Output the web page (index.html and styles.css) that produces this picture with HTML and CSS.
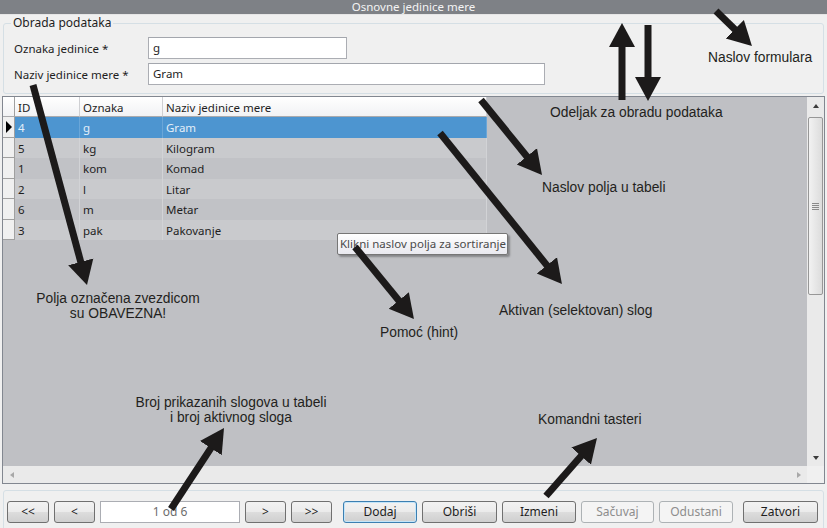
FILE: index.html
```html
<!DOCTYPE html>
<html lang="sr">
<head>
<meta charset="utf-8">
<title>Osnovne jedinice mere</title>
<link rel="stylesheet" href="styles.css">
</head>
<body>
<div class="window">
  <div class="titlebar">Osnovne jedinice mere</div>

  <fieldset class="editor">
    <legend>Obrada podataka</legend>
    <div class="fields">
      <div class="field">
        <label>Oznaka jedinice *</label>
        <div class="input input-short">g</div>
      </div>
      <div class="field">
        <label>Naziv jedinice mere *</label>
        <div class="input input-long">Gram</div>
      </div>
    </div>
  </fieldset>

  <div class="grid">
    <div class="grid-main">
      <div class="grid-body">
        <div class="row head">
          <div class="rh"></div>
          <div class="cell">ID</div>
          <div class="cell">Oznaka</div>
          <div class="cell">Naziv jedinice mere</div>
        </div>
        <div class="row selected">
          <div class="rh"><span class="current"></span></div>
          <div class="cell">4</div>
          <div class="cell">g</div>
          <div class="cell">Gram</div>
        </div>
        <div class="row light">
          <div class="rh"></div>
          <div class="cell">5</div>
          <div class="cell">kg</div>
          <div class="cell">Kilogram</div>
        </div>
        <div class="row dark">
          <div class="rh"></div>
          <div class="cell">1</div>
          <div class="cell">kom</div>
          <div class="cell">Komad</div>
        </div>
        <div class="row light">
          <div class="rh"></div>
          <div class="cell">2</div>
          <div class="cell">l</div>
          <div class="cell">Litar</div>
        </div>
        <div class="row dark">
          <div class="rh"></div>
          <div class="cell">6</div>
          <div class="cell">m</div>
          <div class="cell">Metar</div>
        </div>
        <div class="row light">
          <div class="rh"></div>
          <div class="cell">3</div>
          <div class="cell">pak</div>
          <div class="cell">Pakovanje</div>
        </div>
        <div class="tooltip">Klikni naslov polja za sortiranje</div>
      </div>
      <div class="vscroll">
        <div class="sbtn"><span class="tri-up"></span></div>
        <div class="vtrack">
          <div class="thumb"><span class="grip"></span></div>
        </div>
        <div class="sbtn"><span class="tri-down"></span></div>
      </div>
    </div>
    <div class="hscroll">
      <div class="sbtn"><span class="tri-left"></span></div>
      <div class="htrack"></div>
      <div class="sbtn"><span class="tri-right"></span></div>
      <div class="corner"></div>
    </div>
  </div>

  <div class="commands">
    <button class="btn w42">&lt;&lt;</button>
    <button class="btn w41">&lt;</button>
    <div class="counter">1 od 6</div>
    <button class="btn w41">&gt;</button>
    <button class="btn w41">&gt;&gt;</button>
    <button class="btn w74 focus group">Dodaj</button>
    <button class="btn w75">Obriši</button>
    <button class="btn w74">Izmeni</button>
    <button class="btn w73" disabled>Sačuvaj</button>
    <button class="btn w74" disabled>Odustani</button>
    <button class="btn w75 last">Zatvori</button>
  </div>

  <div class="annotations">
    <svg class="arrows" width="827" height="528" viewBox="0 0 827 528">
      <defs>
        <marker id="head" markerUnits="userSpaceOnUse" markerWidth="26" markerHeight="28" viewBox="0 -14 26 28" refX="1" refY="0" orient="auto">
          <path d="M0,-13 L24,0 L0,13 z" fill="#1c1a1a"/>
        </marker>
      </defs>
      <g stroke="#1c1a1a" stroke-width="7" marker-end="url(#head)">
        <line x1="716" y1="11" x2="735.5" y2="30"/>
        <line x1="622" y1="100" x2="622" y2="46"/>
        <line x1="648" y1="25" x2="648" y2="78"/>
        <line x1="481" y1="100" x2="527.5" y2="157.2"/>
        <line x1="440" y1="133" x2="547.5" y2="266.1"/>
        <line x1="355" y1="247" x2="399.4" y2="301.2"/>
        <line x1="33" y1="85" x2="81" y2="262.8"/>
        <line x1="171" y1="509" x2="211.4" y2="447.3"/>
        <line x1="546" y1="496" x2="581.8" y2="455.3"/>
      </g>
    </svg>
    <div class="note n-form">Naslov formulara</div>
    <div class="note n-section">Odeljak za obradu podataka</div>
    <div class="note n-header">Naslov polja u tabeli</div>
    <div class="note n-active">Aktivan (selektovan) slog</div>
    <div class="note n-hint">Pomoć (hint)</div>
    <div class="note center n-required">Polja označena zvezdicom<br>su OBAVEZNA!</div>
    <div class="note center n-count">Broj prikazanih slogova u tabeli<br>i broj aktivnog sloga</div>
    <div class="note n-buttons">Komandni tasteri</div>
  </div>
</div>
</body>
</html>
```
FILE: styles.css
```css
* {
  box-sizing: border-box;
}

body {
  margin: 0;
  background: #f0f0f0;
  font-family: "Noto Sans", "Open Sans", sans-serif;
  font-size: 11.5px;
  color: #1e1e1e;
}

.window {
  position: relative;
  width: 827px;
  height: 528px;
  overflow: hidden;
  display: flex;
  flex-direction: column;
  background: #f0f0f0;
}

.titlebar {
  flex: none;
  height: 15px;
  background: #7e8186;
  color: #f4f4f4;
  text-align: center;
  font-size: 11.5px;
  line-height: 14px;
  border-bottom: 1px solid #e6e6e6;
}

/* ---------- editor group ---------- */
.editor {
  flex: none;
  margin: 0 3px 2px 3px;
  padding: 0 8px 8px 8px;
  border: 1px solid #d5dfe5;
  border-radius: 3px;
  min-width: 0;
}

.editor legend {
  padding: 0 2px;
  margin-left: -1px;
  line-height: 16px;
  font-size: 12px;
  color: #1e1e1e;
}

.fields {
  margin-top: 6px;
  display: flex;
  flex-direction: column;
  gap: 4px;
}

.field {
  display: flex;
  align-items: center;
  height: 22px;
}

.field label {
  width: 136px;
  padding-left: 2px;
}

.input {
  height: 22px;
  border: 1px solid #abadb3;
  border-top-color: #a3a6ad;
  background: #fff;
  padding: 0 4px;
  line-height: 20px;
}

.input-short { width: 199px; }
.input-long  { width: 397px; }

/* ---------- grid ---------- */
.grid {
  flex: none;
  margin: 0 2px;
  height: 388px;
  border: 1px solid #828790;
  display: flex;
  flex-direction: column;
  background: #bfc0c4;
}

.grid-main {
  flex: 1;
  display: flex;
  min-height: 0;
}

.grid-body {
  flex: 1;
  position: relative;
}

.row {
  display: grid;
  grid-template-columns: 12px 65px 83px 324px;
  height: 20.5px;
  line-height: 20px;
}

.row.head {
  height: 20px;
  line-height: 19px;
}

.rh {
  background: #f0f0f0;
  border-right: 1px solid #a0a0a0;
  border-bottom: 1px solid #a0a0a0;
  display: flex;
  align-items: center;
}

.cell {
  padding: 1px 0 0 3px;
  border-right: 1px solid #d2d3d6;
  white-space: nowrap;
  overflow: hidden;
}

.head .cell,
.head .rh {
  background: linear-gradient(#ffffff, #f1f2f4);
  border-right: 1px solid #cfd0d3;
  border-bottom: 1px solid #a9aaad;
  color: #1e1e1e;
}

.head .rh {
  border-right-color: #a0a0a0;
}

.light .cell { background: #c9cacd; }
.dark .cell  { background: #c1c2c6; }

.selected .cell {
  background: #4d95d0;
  color: #e3eef8;
  border-right-color: #6aa6d8;
}

.current {
  display: block;
  width: 0;
  height: 0;
  margin-left: 3px;
  border-left: 6px solid #000;
  border-top: 6px solid transparent;
  border-bottom: 6px solid transparent;
}

.tooltip {
  position: absolute;
  left: 334px;
  top: 136px;
  width: 171px;
  height: 22px;
  padding-left: 2px;
  border: 1px solid #767676;
  border-radius: 2px;
  background: linear-gradient(#ffffff, #e9e9ef);
  box-shadow: 2px 2px 2px rgba(0, 0, 0, 0.3);
  color: #4a4a4a;
  line-height: 20px;
  white-space: nowrap;
}

/* ---------- scrollbars ---------- */
.vscroll {
  flex: none;
  width: 17px;
  background: #eaeaea;
  display: flex;
  flex-direction: column;
}

.sbtn {
  flex: none;
  width: 17px;
  height: 17px;
  display: flex;
  align-items: center;
  justify-content: center;
}

.vtrack {
  flex: 1;
  padding: 3px 1px 0 1px;
}

.thumb {
  height: 178px;
  border: 1px solid #979797;
  border-radius: 2px;
  background: linear-gradient(to right, #f2f2f2, #dcdcdc);
  display: flex;
  align-items: center;
  justify-content: center;
}

.grip {
  display: block;
  width: 7px;
  height: 7px;
  background: repeating-linear-gradient(#8a8a8a 0 1px, transparent 1px 2px);
}

.tri-up,
.tri-down,
.tri-left,
.tri-right {
  display: block;
  width: 0;
  height: 0;
}

.tri-up {
  border-left: 3.5px solid transparent;
  border-right: 3.5px solid transparent;
  border-bottom: 4px solid #3c3c3c;
}

.tri-down {
  border-left: 3.5px solid transparent;
  border-right: 3.5px solid transparent;
  border-top: 4px solid #3c3c3c;
}

.tri-left {
  border-top: 3.5px solid transparent;
  border-bottom: 3.5px solid transparent;
  border-right: 4px solid #a8a8a8;
}

.tri-right {
  border-top: 3.5px solid transparent;
  border-bottom: 3.5px solid transparent;
  border-left: 4px solid #a8a8a8;
}

.hscroll {
  flex: none;
  height: 17px;
  display: flex;
  background: #eaeaea;
}

.htrack {
  flex: 1;
}

.corner {
  width: 17px;
  background: #f0f0f0;
}

/* ---------- command bar ---------- */
.commands {
  flex: none;
  margin: 6px 3px 0 3px;
  padding: 10px 0 10px 3px;
  border: 1px solid #d5dfe5;
  border-radius: 3px;
  display: flex;
  gap: 5px;
}

.btn {
  height: 22px;
  padding: 0;
  border: 1px solid #707070;
  border-radius: 3px;
  background: linear-gradient(#f2f2f2 0%, #ebebeb 50%, #dddddd 51%, #cfcfcf 100%);
  font-family: "Noto Sans", "Open Sans", sans-serif;
  font-size: 12px;
  color: #1e1e1e;
  line-height: 20px;
}

.btn.focus {
  border-color: #3c7fb1;
  box-shadow: inset 0 0 0 1px #c4e5f9;
}

.btn:disabled {
  border-color: #adb2b5;
  background: #f4f4f4;
  color: #8d8d8d;
}

.btn.group { margin-left: 6px; }
.btn.last  { margin-left: 5px; }

.w41 { width: 41px; }
.w42 { width: 42px; }
.w73 { width: 73px; }
.w74 { width: 74px; }
.w75 { width: 75px; }

.counter {
  width: 140px;
  height: 22px;
  border: 1px solid #abadb3;
  background: #fff;
  color: #6d6d6d;
  text-align: center;
  line-height: 20px;
  font-size: 12px;
}

/* ---------- annotation overlay ---------- */
.annotations {
  position: absolute;
  left: 0;
  top: 0;
  width: 827px;
  height: 528px;
  pointer-events: none;
  font-family: "Liberation Sans", Arial, sans-serif;
  font-size: 13.8px;
  color: #231f20;
}

.arrows {
  position: absolute;
  left: 0;
  top: 0;
}

.note {
  position: absolute;
  line-height: 15px;
  white-space: nowrap;
}

.note.center {
  width: 240px;
  text-align: center;
}

.n-form     { left: 708px; top: 50px; }
.n-section  { left: 550px; top: 105px; }
.n-header   { left: 542px; top: 180px; }
.n-active   { left: 499px; top: 303px; }
.n-hint     { left: 380px; top: 325px; }
.n-required { left: -2px;  top: 291px; }
.n-count    { left: 111px; top: 395px; }
.n-buttons  { left: 538px; top: 412px; }
```
